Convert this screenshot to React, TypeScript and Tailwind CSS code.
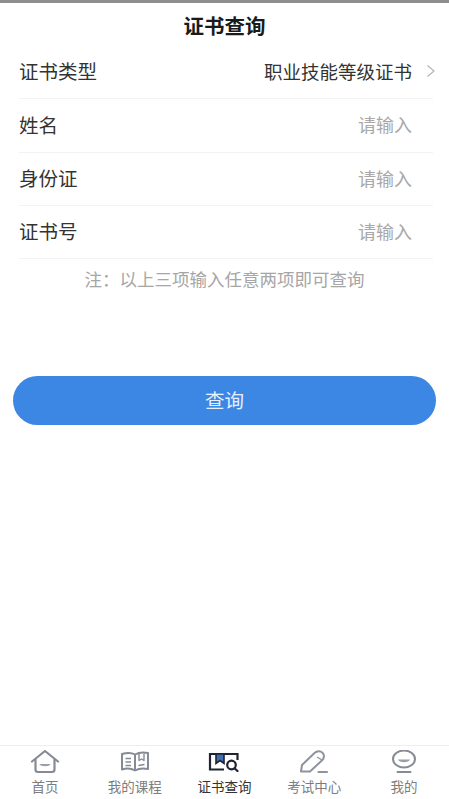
import { FC, ReactNode } from "react";

const font = "font-['Noto_Sans_CJK_SC','Noto_Sans',sans-serif]";

interface RowProps {
  label: string;
  value: string;
  selected?: boolean;
}

const Row: FC<RowProps> = ({ label, value, selected }) => (
  <div className="relative flex h-[53.33px] items-center justify-between border-b border-[#f3f3f3] pb-[2px]">
    <span className="text-[19.5px] leading-none text-[#333333]">{label}</span>
    <span className={`mr-[21px] leading-none ${selected ? "text-[18.5px] text-[#333333]" : "text-[18px] text-[#a8a8a8]"}`}>
      {value}
    </span>
    {selected && (
      <svg width="10" height="14" viewBox="0 0 10 14" fill="none" className="absolute right-[-3px] top-[18px]">
        <path d="M1.5 1.5L8 7l-6.5 5.500" stroke="#b5b5b5" strokeWidth="1.2" />
      </svg>
    )}
  </div>
);

const Home = () => (
  <svg width="30" height="24" viewBox="0 0 30 24" fill="none" stroke="#868a95" strokeWidth="2.200" strokeLinejoin="round">
    <path d="M2 11.500L15 1l13 10.500" strokeLinecap="round" />
    <path d="M5.500 9v10.500a2.500 2.500 0 0 0 2.500 2.500h14a2.500 2.500 0 0 0 2.500-2.500V9" />
    <path d="M9.500 14h11c-.5 3-10.500 3-11 0z" fill="#9a9ea8" stroke="none" />
  </svg>
);

const Book = () => (
  <svg width="30" height="22" viewBox="0 0 30 22" fill="none" stroke="#868a95" strokeWidth="2" strokeLinejoin="round">
    <path d="M2 3c5-1.500 9.500-1.500 13 .5 3.500-2 8-2.500 13-1.500v16c-5-1-9.500-.5-13 1.500-3.500-2-8-2.500-13-1z" />
    <path d="M15 3.500v16" />
    <path d="M5.500 7.500h5.500M5.500 11h5.500M5.500 14.500h5.500M18.500 14.500l6-1" strokeWidth="1.700" />
    <path d="M19 3v6.500l2.500-1.500L24 9.500V2.500" strokeWidth="1.400" />
  </svg>
);

const CertSearch = () => (
  <svg width="32" height="20" viewBox="0 0 32 20" fill="none" stroke="#1f2333" strokeWidth="2.200">
    <path d="M29.500 8V2H2v15.500h14" />
    <path d="M8 2h8v9.500l-4-3-4 3z" fill="#3f6fb5" strokeWidth="1.600" />
    <circle cx="23.500" cy="13" r="4.300" />
    <path d="M26.500 16.200l3 2.800" strokeLinecap="round" />
  </svg>
);

const Pen = () => (
  <svg width="30" height="24" viewBox="0 0 30 24" fill="none" stroke="#8f939d" strokeWidth="2" strokeLinejoin="round">
    <path d="M2 21.500l1-6.500L15.500 3c2.500-2.300 6-2.300 8 -.3s2 5.300-.3 7.500L11 21.500z" />
    <path d="M18 7l5 3" strokeWidth="1.200" />
    <path d="M19.500 22h8.500" strokeLinecap="round" strokeWidth="2.200" />
  </svg>
);

const Me = () => (
  <svg width="26" height="24" viewBox="0 0 26 24" fill="none" stroke="#868a95" strokeWidth="2">
    <ellipse cx="13" cy="9" rx="11" ry="8.500" />
    <path d="M7 9.500h12c-1 3.500-11 3.500-12 0z" fill="#9a9ea8" stroke="none" />
    <path d="M6.500 22h13" strokeLinecap="round" />
  </svg>
);

interface TabProps {
  icon: ReactNode;
  label: string;
  active?: boolean;
}

const Tab: FC<TabProps> = ({ icon, label, active }) => (
  <div className="flex flex-1 flex-col items-center">
    <div className="flex h-[26px] items-center justify-center">{icon}</div>
    <span className={`mt-[5px] text-[13.5px] leading-none ${active ? "text-[#333333]" : "text-[#7d7d7d]"}`}>
      {label}
    </span>
  </div>
);

export default function App() {
  return (
    <div className={`flex h-[799px] w-[449px] flex-col overflow-hidden bg-white ${font}`}>
      <div className="h-[3px] bg-[#8e8e8e]" />
      <div className="flex h-[43px] items-center justify-center pt-[1px] text-[20.5px] font-bold leading-none text-[#1a1a1a]">
        证书查询
      </div>
      <div className="px-[16px] pl-[19px]">
        <Row label="证书类型" value="职业技能等级证书" selected />
        <Row label="姓名" value="请输入" />
        <Row label="身份证" value="请输入" />
        <Row label="证书号" value="请输入" />
      </div>
      <p className="mt-[11px] text-center text-[17.5px] leading-none text-[#a6a6a6]">注：以上三项输入任意两项即可查询</p>
      <div className="mt-[88px] px-[13px]">
        <button className="flex h-[49px] w-full items-center justify-center rounded-full bg-[#3c86e4] pb-[2px] text-[19.5px] leading-none text-[#e8f0fb]">
          查询
        </button>
      </div>
      <div className="mt-auto flex h-[54px] border-t border-[#eeeeee] bg-white pt-[3px]">
        <Tab icon={<Home />} label="首页" />
        <Tab icon={<Book />} label="我的课程" />
        <Tab icon={<CertSearch />} label="证书查询" active />
        <Tab icon={<Pen />} label="考试中心" />
        <Tab icon={<Me />} label="我的" />
      </div>
    </div>
  );
}
